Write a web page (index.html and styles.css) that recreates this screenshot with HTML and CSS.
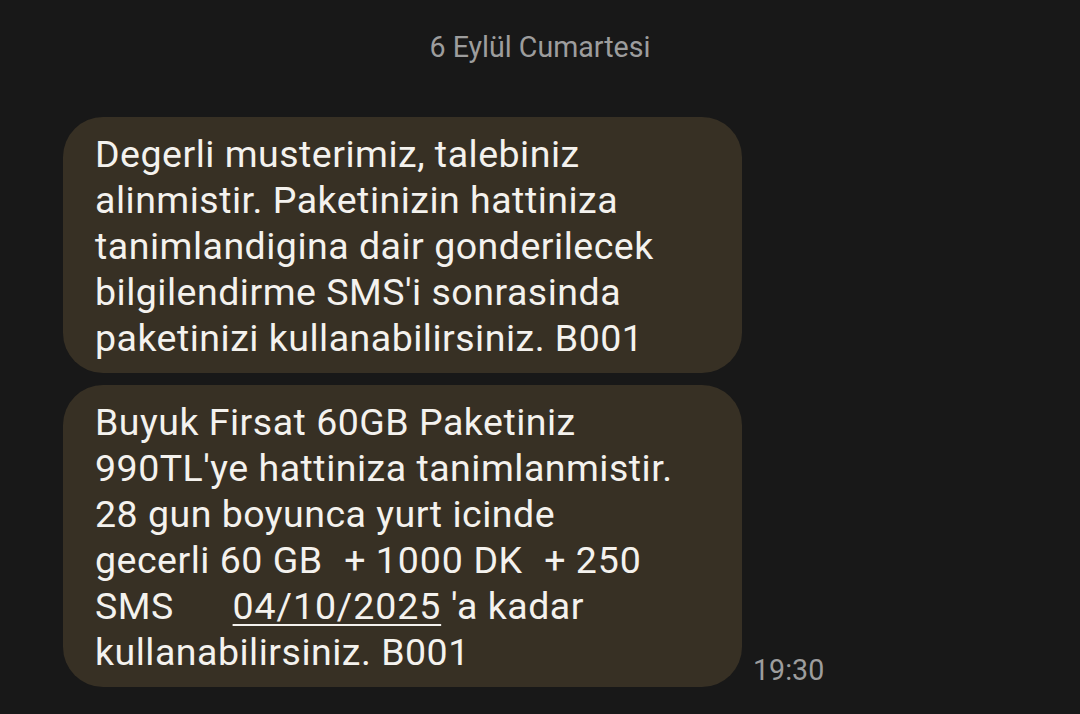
FILE: index.html
```html
<!DOCTYPE html>
<html lang="tr">
<head>
<meta charset="utf-8">
<title>Mesajlar</title>
<link rel="stylesheet" href="styles.css">
</head>
<body>
<main class="thread">
  <div class="date">6 Eylül Cumartesi</div>
  <div class="group">
    <div class="row">
      <div class="bubble"><span class="line">Degerli musterimiz, talebiniz</span><span class="line">alinmistir. Paketinizin hattiniza</span><span class="line">tanimlandigina dair gonderilecek</span><span class="line">bilgilendirme SMS'i sonrasinda</span><span class="line">paketinizi kullanabilirsiniz. B001</span></div>
    </div>
    <div class="row">
      <div class="bubble"><span class="line">Buyuk Firsat 60GB Paketiniz</span><span class="line">990TL'ye hattiniza tanimlanmistir.</span><span class="line">28 gun boyunca yurt icinde</span><span class="line">gecerli 60 GB <span class="gap"> </span>+ <span class="num">1000</span> DK <span class="gap"> </span>+ <span class="num">250</span></span><span class="line">SMS      <a class="link num" href="#">04/10/2025</a> 'a kadar</span><span class="line">kullanabilirsiniz. B001</span></div>
      <div class="time">19:30</div>
    </div>
  </div>
</main>
</body>
</html>
```

FILE: styles.css
```css
html, body {
  margin: 0;
  padding: 0;
  background: #181818;
  height: 100%;
}
body {
  font-family: Roboto, "Noto Sans", "Liberation Sans", sans-serif;
  overflow: hidden;
}
.thread {
  padding-top: 30px;
}
.date {
  text-align: center;
  color: #9d9d9d;
  font-size: 28.6px;
  line-height: 34px;
  margin-bottom: 53px;
}
.group {
  display: flex;
  flex-direction: column;
  gap: 12px;
  padding-left: 63px;
}
.row {
  display: flex;
  align-items: flex-end;
  gap: 11px;
}
.bubble {
  width: 679px;
  box-sizing: border-box;
  background: #373024;
  border-radius: 40px;
  padding: 14px 20px 12px 32px;
  color: #f4f2ee;
  font-size: 37.5px;
  letter-spacing: 0.5px;
  line-height: 46px;
}
.line {
  display: block;
  white-space: pre;
}
.gap {
  letter-spacing: 2.5px;
}
.num {
  letter-spacing: 0.9px;
}
.link {
  color: inherit;
  text-decoration: underline;
  text-decoration-thickness: 2px;
  text-underline-offset: 5px;
}
.time {
  color: #9d9d9d;
  font-size: 28.6px;
  line-height: 34px;
  margin-bottom: 0;
}
```
